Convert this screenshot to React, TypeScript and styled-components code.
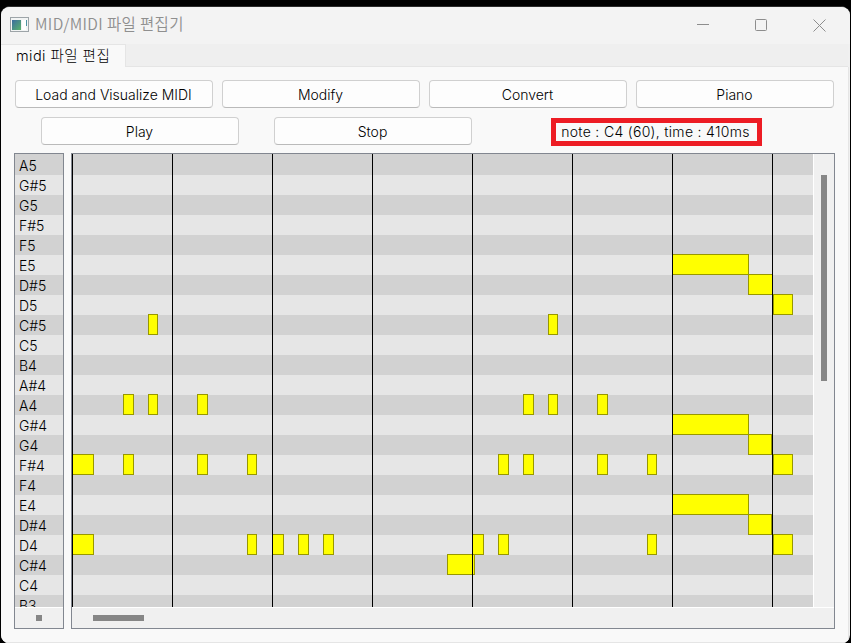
import React from 'react';
import styled, { createGlobalStyle } from 'styled-components';

const GlobalStyle = createGlobalStyle`
  * { box-sizing: border-box; }
  body {
    margin: 0;
    background: #000;
    overflow: hidden;
    font: 300 14px/20px Inter, "Noto Sans CJK KR", sans-serif;
    color: #000;
  }
`;

const Desktop = styled.div`
  height: 643px;
  padding: 6px 1px 0 1px;
  background: #000;
`;

const Window = styled.div`
  display: flex;
  flex-direction: column;
  width: 849px;
  height: 637px;
  border-top: 1px solid #2b2b2b;
  border-radius: 9px 9px 8px 8px;
  background: #f0f0f0;
  overflow: hidden;
`;

const TitleBar = styled.header`
  display: flex;
  align-items: center;
  flex: none;
  height: 37px;
  padding: 0 24px 1px 9px;
  background: #f3f3f3;
`;

const Title = styled.h1`
  flex: 1;
  margin: -4px 0 0 5px;
  font: 350 15.5px/22px "Noto Sans CJK KR", sans-serif;
  letter-spacing: 0.36px;
  color: #8f8f8f;
`;

const Controls = styled.div`
  display: flex;
  gap: 45px;
  svg { display: block; }
`;

const TabStrip = styled.nav`
  display: flex;
  flex: none;
  height: 23px;
  padding-right: 2px;
`;

const Tab = styled.div`
  width: 125px;
  padding: 1px 0 0 15px;
  border: solid #e5e5e5;
  border-width: 1px 1px 0 0;
  background: #f9f9f9;
  font-size: 14.5px;
  line-height: 19px;
  letter-spacing: 0.45px;
  white-space: nowrap;
`;

const StripRest = styled.div`
  flex: 1;
  border-bottom: 1px solid #e5e5e5;
  background: #efefef;
`;

const Pane = styled.main`
  flex: 1;
  margin-right: 1px;
  padding: 13px 12px 0 14px;
  border-right: 1px solid #e5e5e5;
  border-bottom: 1px solid #e5e5e5;
  background: #f9f9f9;
`;

const ButtonRow = styled.div`
  display: flex;
  gap: 9px;
`;

const PlaybackRow = styled.div`
  display: flex;
  align-items: center;
  gap: 35px;
  height: 28px;
  margin: 9px 0 8px 26px;
`;

const Button = styled.button`
  width: 198px;
  height: 28px;
  padding: 1px 1px 0 0;
  border: 1px solid #d0d0d0;
  border-bottom-color: #bababa;
  border-radius: 4px;
  background: #fdfdfd;
  font: inherit;
  color: inherit;
`;

const NoteReadout = styled.div`
  display: flex;
  align-items: center;
  justify-content: center;
  width: 211px;
  height: 28px;
  margin: 1px 0 0 44px;
  padding: 1px 2px 0 0;
  border: 5px solid #ed1c24;
  letter-spacing: 0.31px;
  white-space: nowrap;
`;

const Editor = styled.section`
  display: flex;
  gap: 7px;
  height: 476px;
  margin-left: -1px;
`;

const Panel = styled.div<{ $width: number }>`
  display: flex;
  flex: none;
  flex-direction: column;
  width: ${(p) => p.$width}px;
  border: 1px solid #828790;
  background: #f0f0f0;
`;

const Viewport = styled.div`
  position: relative;
  flex: none;
  height: 453px;
  overflow: hidden;
`;

const Row = styled.div<{ $dark: boolean }>`
  height: 20px;
  padding-left: 4px;
  line-height: 22px;
  background: ${(p) => (p.$dark ? '#d2d2d2' : '#e6e6e6')};
  &:first-child { height: 21px; padding-top: 1px; }
`;

const RollArea = styled.div`
  display: grid;
  grid-template-columns: 741px 21px;
`;

const BarLine = styled.i<{ $x: number }>`
  position: absolute;
  top: 0;
  bottom: 0;
  left: ${(p) => p.$x}px;
  width: 1px;
  background: #000;
`;

const Note = styled.i<{ $x: number; $row: number; $w: number }>`
  position: absolute;
  left: ${(p) => p.$x}px;
  top: ${(p) => p.$row * 20}px;
  width: ${(p) => p.$w}px;
  height: 21px;
  border: 1px solid #989800;
  background: #ff0;
`;

const VerticalTrack = styled.div`
  padding: 21px 0 0 7px;
  border-left: 1px solid #fff;
`;

const HorizontalTrack = styled.div<{ $inset: number }>`
  flex: 1;
  padding: 7px 0 0 ${(p) => p.$inset}px;
  border-top: 1px solid #fff;
`;

const Thumb = styled.div<{ $w: number; $h: number }>`
  width: ${(p) => p.$w}px;
  height: ${(p) => p.$h}px;
  background: #868686;
`;

const pitches = [
  'A5', 'G#5', 'G5', 'F#5', 'F5', 'E5', 'D#5', 'D5', 'C#5', 'C5', 'B4', 'A#4',
  'A4', 'G#4', 'G4', 'F#4', 'F4', 'E4', 'D#4', 'D4', 'C#4', 'C4', 'B3',
];

// [start, length] of every note, by pitch
const notes: Record<string, [number, number][]> = {
  E5: [[600, 77]],
  'D#5': [[676, 25]],
  D5: [[701, 20]],
  'C#5': [[76, 10], [476, 10]],
  A4: [[51, 11], [76, 10], [125, 11], [451, 11], [476, 10], [525, 11]],
  'G#4': [[600, 77]],
  G4: [[676, 24]],
  'F#4': [[0, 22], [51, 11], [125, 11], [175, 10], [426, 11], [451, 11], [525, 11], [575, 10], [701, 20]],
  E4: [[600, 77]],
  'D#4': [[676, 24]],
  D4: [[0, 22], [175, 10], [200, 12], [226, 11], [251, 11], [400, 12], [426, 11], [575, 10], [701, 20]],
  'C#4': [[375, 28]],
};

const bars = [0, 100, 200, 300, 400, 500, 600, 700];

const AppIcon = () => (
  <svg width="20" height="16" viewBox="0 0 20 16">
    <defs>
      <linearGradient id="screen" x1="0" y1="0" x2="1" y2="1">
        <stop offset="0" stopColor="#3c6ca0" />
        <stop offset="1" stopColor="#59b36b" />
      </linearGradient>
    </defs>
    <rect x="0.5" y="0.5" width="18" height="14" fill="#f2f4f4" stroke="#9da4a8" />
    <rect x="2" y="3" width="9" height="10" fill="url(#screen)" />
    <rect x="12" y="3" width="4" height="10" fill="#fff" />
    <rect x="16" y="3" width="1" height="6" fill="#4c92a2" />
  </svg>
);

export default function App() {
  return (
    <Desktop>
      <GlobalStyle />
      <Window>
        <TitleBar>
          <AppIcon />
          <Title>MID/MIDI 파일 편집기</Title>
          <Controls>
            <svg width="13" height="13" viewBox="0 0 13 13" stroke="#8d8d8d">
              <path d="M0 5.5H12" />
            </svg>
            <svg width="13" height="13" viewBox="0 0 13 13" fill="none" stroke="#8d8d8d">
              <rect x="0.5" y="0.5" width="11" height="11" rx="1" />
            </svg>
            <svg width="13" height="13" viewBox="0 0 13 13" stroke="#8d8d8d">
              <path d="M0.5 0.5L12.5 12.5M12.5 0.5L0.5 12.5" />
            </svg>
          </Controls>
        </TitleBar>
        <TabStrip>
          <Tab>midi 파일 편집</Tab>
          <StripRest />
        </TabStrip>
        <Pane>
          <ButtonRow>
            <Button>Load and Visualize MIDI</Button>
            <Button>Modify</Button>
            <Button>Convert</Button>
            <Button>Piano</Button>
          </ButtonRow>
          <PlaybackRow>
            <Button>Play</Button>
            <Button>Stop</Button>
            <NoteReadout>note : C4 (60), time : 410ms</NoteReadout>
          </PlaybackRow>
          <Editor>
            <Panel $width={50}>
              <Viewport>
                {pitches.map((pitch, i) => (
                  <Row key={pitch} $dark={i % 2 === 0}>{pitch}</Row>
                ))}
              </Viewport>
              <HorizontalTrack $inset={21}>
                <Thumb $w={6} $h={6} />
              </HorizontalTrack>
            </Panel>
            <Panel $width={764}>
              <RollArea>
                <Viewport>
                  {pitches.map((pitch, i) => (
                    <Row key={pitch} $dark={i % 2 === 0} />
                  ))}
                  {pitches.flatMap((pitch, row) =>
                    (notes[pitch] ?? []).map(([x, w]) => (
                      <Note key={`${pitch}-${x}`} $x={x} $row={row} $w={w} />
                    )),
                  )}
                  {bars.map((x) => (
                    <BarLine key={x} $x={x} />
                  ))}
                </Viewport>
                <VerticalTrack>
                  <Thumb $w={6} $h={206} />
                </VerticalTrack>
              </RollArea>
              <HorizontalTrack $inset={21}>
                <Thumb $w={51} $h={6} />
              </HorizontalTrack>
            </Panel>
          </Editor>
        </Pane>
      </Window>
    </Desktop>
  );
}
